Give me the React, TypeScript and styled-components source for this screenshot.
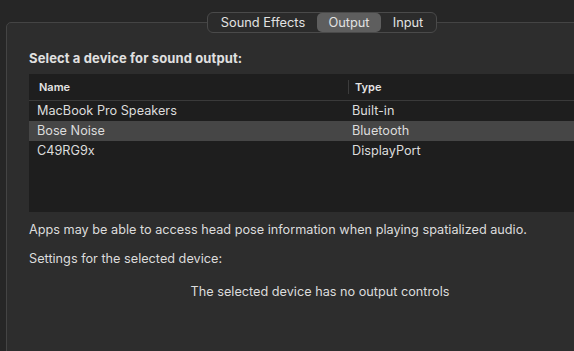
import React from "react";
import styled, { createGlobalStyle } from "styled-components";

const Global = createGlobalStyle`
  html, body { margin: 0; padding: 0; background: #262626; overflow: hidden; }
  body { font-family: Inter, "Noto Sans", "Liberation Sans", sans-serif; -webkit-font-smoothing: antialiased; }
`;

const Page = styled.div`
  width: 574px;
  height: 351px;
  overflow: hidden;
  padding: 22px 0 0 6px;
  box-sizing: border-box;
`;

const GroupBox = styled.div`
  position: relative;
  width: 628px;
  height: 400px;
  box-sizing: border-box;
  border: 1px solid #444444;
  border-radius: 5px;
  background: #2d2d2d;
  padding: 27px 22px 0 22px;
  color: #dedede;
  font-size: 12.7px;
  line-height: 16px;
`;

const Segmented = styled.div`
  position: absolute;
  top: -11px;
  left: 200px;
  height: 21px;
  box-sizing: border-box;
  display: flex;
  align-items: center;
  padding: 0 1px;
  border: 1px solid #4a4a4a;
  border-radius: 6px;
  background: #2b2b2b;
`;

const Segment = styled.div<{ $active?: boolean; $w: number }>`
  width: ${(p) => p.$w}px;
  height: 19px;
  display: flex;
  align-items: center;
  justify-content: center;
  border-radius: 5px;
  background: ${(p) => (p.$active ? "#5e5e5e" : "transparent")};
  color: #e2e2e2;
  font-size: 12.8px;
`;

const Heading = styled.div`
  font-weight: 700;
  font-size: 13px;
  letter-spacing: 0.12px;
  color: #e0e0e0;
`;

const Table = styled.div`
  margin-top: 8px;
  height: 138px;
  background: #1e1e1e;
`;

const HeaderRow = styled.div`
  display: grid;
  grid-template-columns: 319px 1fr;
  height: 26px;
  align-items: center;
  border-bottom: 1px solid #3a3a3a;
  font-size: 11px;
  font-weight: 600;
  color: #e4e4e4;
`;

const HeadCell = styled.div<{ $divider?: boolean }>`
  padding-left: ${(p) => (p.$divider ? 6 : 10)}px;
  height: 14px;
  line-height: 14px;
  border-left: ${(p) => (p.$divider ? "1px solid #3c3c3c" : "none")};
`;

const Row = styled.div<{ $selected?: boolean }>`
  display: grid;
  grid-template-columns: 319px 1fr;
  height: 20px;
  align-items: center;
  background: ${(p) => (p.$selected ? "#464646" : "transparent")};
  color: #dcdcdc;
`;

const Cell = styled.div<{ $second?: boolean }>`
  padding-left: ${(p) => (p.$second ? 4 : 8)}px;
`;

const Para = styled.div<{ $mt: number; $center?: boolean }>`
  margin-top: ${(p) => p.$mt}px;
  text-align: ${(p) => (p.$center ? "center" : "left")};
  color: #dcdcdc;
`;

const devices = [
  { name: "MacBook Pro Speakers", type: "Built-in" },
  { name: "Bose Noise", type: "Bluetooth", selected: true },
  { name: "C49RG9x", type: "DisplayPort" },
];

export default function App() {
  return (
    <>
      <Global />
      <Page>
        <GroupBox>
          <Segmented>
            <Segment $w={108}>Sound Effects</Segment>
            <Segment $w={64} $active>Output</Segment>
            <Segment $w={54}>Input</Segment>
          </Segmented>
          <Heading>Select a device for sound output:</Heading>
          <Table>
            <HeaderRow>
              <HeadCell>Name</HeadCell>
              <HeadCell $divider>Type</HeadCell>
            </HeaderRow>
            {devices.map((d) => (
              <Row key={d.name} $selected={d.selected}>
                <Cell>{d.name}</Cell>
                <Cell $second>{d.type}</Cell>
              </Row>
            ))}
          </Table>
          <Para $mt={10}>Apps may be able to access head pose information when playing spatialized audio.</Para>
          <Para $mt={13}>Settings for the selected device:</Para>
          <Para $mt={17} $center>The selected device has no output controls</Para>
        </GroupBox>
      </Page>
    </>
  );
}
